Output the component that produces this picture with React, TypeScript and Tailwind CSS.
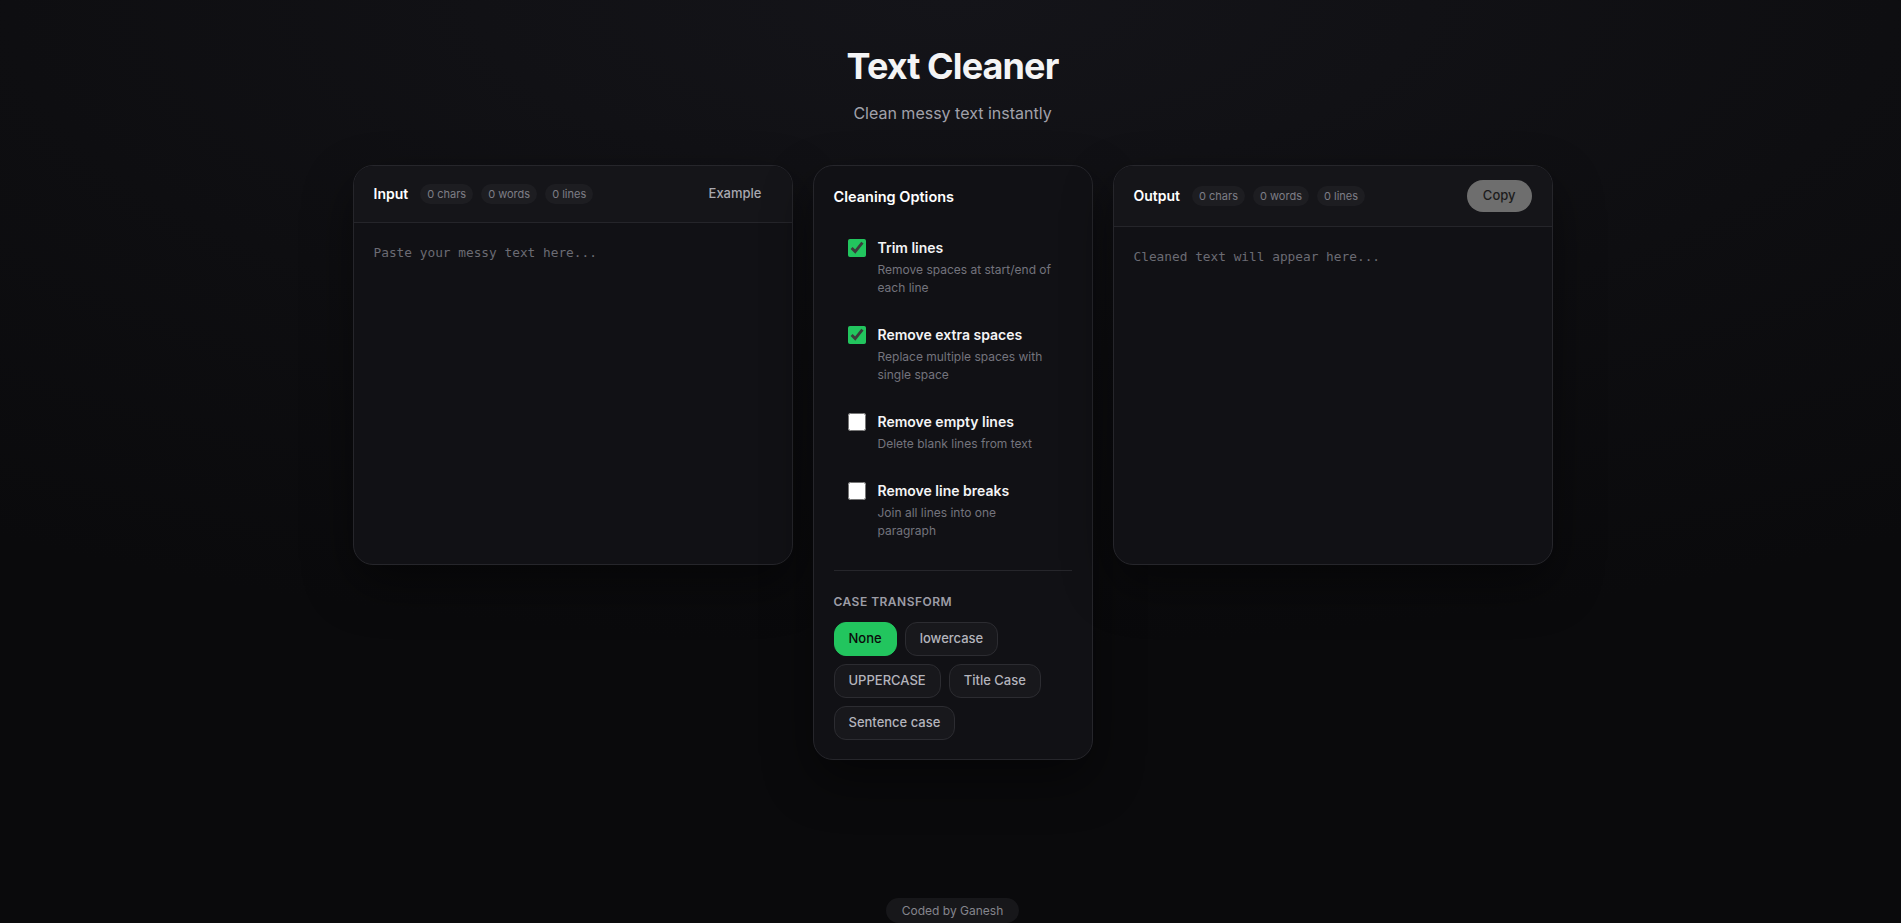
import { useState } from 'react'

type CaseMode = 'none' | 'lower' | 'upper' | 'title' | 'sentence'

const OPTIONS = [
  { key: 'trim', label: 'Trim lines', desc: 'Remove spaces at start/end of each line', on: true },
  { key: 'spaces', label: 'Remove extra spaces', desc: 'Replace multiple spaces with single space', on: true },
  { key: 'empty', label: 'Remove empty lines', desc: 'Delete blank lines from text', on: false },
  { key: 'breaks', label: 'Remove line breaks', desc: 'Join all lines into one paragraph', on: false },
]

const CASES: { key: CaseMode; label: string }[] = [
  { key: 'none', label: 'None' },
  { key: 'lower', label: 'lowercase' },
  { key: 'upper', label: 'UPPERCASE' },
  { key: 'title', label: 'Title Case' },
  { key: 'sentence', label: 'Sentence case' },
]

const countStats = (text: string) => {
  const chars = text.length
  const words = text.trim() ? text.trim().split(/\s+/).length : 0
  const lines = text ? text.split('\n').length : 0
  return { chars, words, lines }
}

const Stats = ({ text }: { text: string }) => {
  const s = countStats(text)
  return (
    <div className="flex items-center gap-2">
      <span className="h-5 px-[7px] rounded-full bg-[#1d1d21] text-[11px] leading-5 text-[#7d7d86]">{s.chars} chars</span>
      <span className="h-5 px-[7px] rounded-full bg-[#1d1d21] text-[11px] leading-5 text-[#7d7d86]">{s.words} words</span>
      <span className="h-5 px-[7px] rounded-full bg-[#1d1d21] text-[11px] leading-5 text-[#7d7d86]">{s.lines} lines</span>
    </div>
  )
}

export default function App() {
  const [input, setInput] = useState('')
  const [checked, setChecked] = useState<Record<string, boolean>>(
    Object.fromEntries(OPTIONS.map(o => [o.key, o.on]))
  )
  const [mode, setMode] = useState<CaseMode>('none')

  // clean the input with the current options
  let output = input
  if (checked.trim) output = output.split('\n').map(l => l.trim()).join('\n')
  if (checked.spaces) output = output.replace(/ {2,}/g, ' ')
  if (checked.empty) output = output.split('\n').filter(l => l.trim()).join('\n')
  if (checked.breaks) output = output.replace(/\n+/g, ' ')
  if (mode === 'lower') output = output.toLowerCase()
  if (mode === 'upper') output = output.toUpperCase()
  if (mode === 'title') output = output.toLowerCase().replace(/\b\w/g, c => c.toUpperCase())
  if (mode === 'sentence') output = output.toLowerCase().replace(/(^\s*\w|[.!?]\s+\w)/g, c => c.toUpperCase())

  return (
    <div
      className="min-h-screen flex flex-col pl-1 bg-[radial-gradient(ellipse_90%_70%_at_50%_0%,#141419_0%,#0e0e11_55%,#0a0a0c_100%)] text-white"
      style={{ fontFamily: 'Inter, "Noto Sans", sans-serif' }}
    >
      <header className="pt-[46px] text-center">
        <h1 className="text-[36px] leading-10 font-bold tracking-[-0.025em] text-[#f4f4f5]">Text Cleaner</h1>
        <p className="mt-[15px] text-[16px] leading-6 text-[#a1a1aa]">Clean messy text instantly</p>
      </header>

      <main className="mt-10 grid grid-cols-[440px_280px_440px] gap-5 justify-center items-start">
        {/* input */}
        <section className="h-[400px] flex flex-col rounded-[20px] border border-[#26262b] bg-[#111115] overflow-hidden shadow-[0_20px_50px_rgba(0,0,0,0.45)]">
          <div className="flex items-center justify-between px-5 py-3.5 border-b border-[#25252a] bg-[#151519]">
            <div className="flex items-center gap-3">
              <span className="text-[14px] leading-5 font-semibold text-white">Input</span>
              <Stats text={input} />
            </div>
            <button
              onClick={() => setInput('  Hello    world  \n\n\n  This   is   messy   text.  ')}
              className="h-7 px-2.5 rounded-lg text-[13px] font-medium text-[#a8a8b0] hover:bg-white/5"
            >
              Example
            </button>
          </div>
          <textarea
            value={input}
            onChange={e => setInput(e.target.value)}
            placeholder="Paste your messy text here..."
            className="flex-1 resize-none bg-transparent px-5 py-5 text-[12.8px] leading-5 text-[#e4e4e7] placeholder:text-[#6b6b73] outline-none"
            style={{ fontFamily: '"DejaVu Sans Mono", monospace' }}
          />
        </section>

        {/* options */}
        <section className="rounded-[20px] border border-[#26262b] bg-[#111115] px-5 pt-[21px] pb-[19px] shadow-[0_20px_50px_rgba(0,0,0,0.45)]">
          <h2 className="text-[14.5px] leading-5 font-semibold text-white">Cleaning Options</h2>
          <div className="mt-[17px] flex flex-col">
            {OPTIONS.map(o => (
              <label key={o.key} className="flex items-start gap-3 px-3.5 py-3.5 rounded-xl cursor-pointer">
                <input
                  type="checkbox"
                  checked={checked[o.key]}
                  onChange={() => setChecked({ ...checked, [o.key]: !checked[o.key] })}
                  className="m-0 mt-px w-[18px] h-[18px] shrink-0 accent-[#22c55e]"
                />
                <div>
                  <div className="text-[14px] leading-5 font-semibold text-[#f4f4f5]">{o.label}</div>
                  <div className="mt-[3px] text-[12px] leading-[18px] text-[#74747d]">{o.desc}</div>
                </div>
              </label>
            ))}
          </div>
          <div className="mt-4 pt-[23px] border-t border-[#26262b]">
            <div className="text-[12px] leading-4 font-semibold tracking-[0.04em] uppercase text-[#9d9da6]">Case transform</div>
            <div className="mt-3 flex flex-wrap gap-2">
              {CASES.map(c => (
                <button
                  key={c.key}
                  onClick={() => setMode(c.key)}
                  className={
                    mode === c.key
                      ? 'h-[34px] px-3.5 rounded-xl border border-[#22c55e] bg-[#22c55e] text-[13px] font-medium text-[#0a0a0a]'
                      : 'h-[34px] px-3.5 rounded-xl border border-[#2c2c31] bg-[#18181c] text-[13px] font-medium text-[#b4b4bc]'
                  }
                >
                  {c.label}
                </button>
              ))}
            </div>
          </div>
        </section>

        {/* output */}
        <section className="h-[400px] flex flex-col rounded-[20px] border border-[#26262b] bg-[#111115] overflow-hidden shadow-[0_20px_50px_rgba(0,0,0,0.45)]">
          <div className="flex items-center justify-between px-5 py-3.5 border-b border-[#25252a] bg-[#151519]">
            <div className="flex items-center gap-3">
              <span className="text-[14px] leading-5 font-semibold text-white">Output</span>
              <Stats text={output} />
            </div>
            <button
              disabled={!output}
              onClick={() => navigator.clipboard?.writeText(output)}
              className="h-8 px-4 rounded-full bg-[#6e6e6e] text-[13px] font-medium text-[#1c1c1c]"
            >
              Copy
            </button>
          </div>
          <textarea
            readOnly
            value={output}
            placeholder="Cleaned text will appear here..."
            className="flex-1 resize-none bg-transparent px-5 py-5 text-[12.8px] leading-5 text-[#e4e4e7] placeholder:text-[#6b6b73] outline-none"
            style={{ fontFamily: '"DejaVu Sans Mono", monospace' }}
          />
        </section>
      </main>

      <footer className="mt-auto pt-10 flex justify-center">
        <span className="h-[25px] px-4 rounded-full bg-[#17171a] text-[12px] leading-[25px] text-[#85858d]">Coded by Ganesh</span>
      </footer>
    </div>
  )
}
